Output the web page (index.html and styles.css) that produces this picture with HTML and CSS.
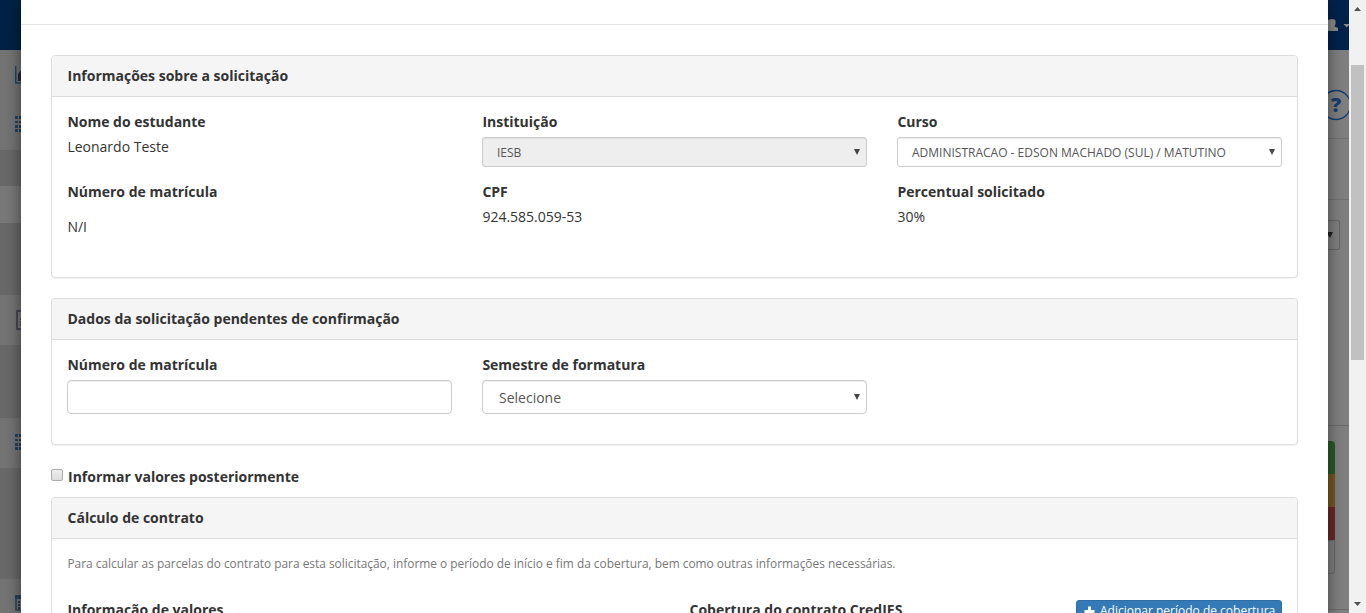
FILE: index.html
```html
<!DOCTYPE html>
<html lang="pt-BR">
<head>
<meta charset="utf-8">
<title>Solicitação</title>
<link rel="stylesheet" href="styles.css">
</head>
<body>
<div class="screen">
  <aside class="side">
    <div class="side-top"></div>
    <div class="side-item h50"><svg class="side-icon" width="18" height="18" viewBox="0 0 18 18"><path d="M.7 0v17H18" fill="none" stroke="#24435f" stroke-width="1.500"/><path d="M3 15V8l3-4 4 4 4-5v12z" fill="#272b45"/></svg></div>
    <div class="side-item h50"><svg class="side-icon" width="18" height="16" viewBox="0 0 18 16" fill="#24435f"><path d="M0 0h3v3H0zM4 0h3v3H4zM8 0h3v3H8zM0 5h3v2H0zM4 5h3v2H4zM8 5h3v2H8zM0 9h3v3H0zM4 9h3v3H4zM8 9h3v3H8zM0 13h3v3H0zM4 13h3v3H4zM8 13h3v3H8z"/></svg></div>
    <div class="side-sub h36"></div>
    <div class="side-active h37"></div>
    <div class="side-sub h72"></div>
    <div class="side-item h50"><svg class="side-icon doc" width="16" height="20" viewBox="0 0 16 20"><path d="M1 1h14v18H1z" fill="#777" stroke="#3b3849" stroke-width="1.500"/><path d="M4 9h8M4 12h8M4 15h8" stroke="#5c3e3e" stroke-width="1.300"/></svg></div>
    <div class="side-sub h73"></div>
    <div class="side-item h50"><svg class="side-icon" width="18" height="16" viewBox="0 0 18 16" fill="#24435f"><path d="M0 0h3v3H0zM4 0h3v3H4zM8 0h3v3H8zM0 5h3v2H0zM4 5h3v2H4zM8 5h3v2H8zM0 9h3v3H0zM4 9h3v3H4zM8 9h3v3H8zM0 13h3v3H0zM4 13h3v3H4zM8 13h3v3H8z"/></svg></div>
    <div class="side-sub h111"></div>
    <div class="side-item h50"><svg class="side-icon" width="16" height="16" viewBox="0 0 16 16"><path d="M1 1h14v14H1z" fill="#777" stroke="#24435f" stroke-width="1.500"/><path d="M0 0h16v4H0z" fill="#24435f"/><path d="M3 6h2v2H3zM6 6h2v2H6zM3 9h2v2H3zM6 9h2v2H6zM3 12h2v2H3z" fill="#303548"/></svg></div>
  </aside>

  <main class="modal">
    <div class="modal-header"></div>
    <div class="modal-body">
      <section class="panel panel-info">
        <h4 class="panel-heading">Informações sobre a solicitação</h4>
        <div class="panel-body grid3">
          <div class="field"><label>Nome do estudante</label><span>Leonardo Teste</span></div>
          <div class="field"><label>Instituição</label><div class="select small disabled"><span>IESB</span><i class="arrow"></i></div></div>
          <div class="field"><label>Curso</label><div class="select small"><span>ADMINISTRACAO - EDSON MACHADO (SUL) / MATUTINO</span><i class="arrow"></i></div></div>
          <div class="field"><label>Número de matrícula</label><span class="low">N/I</span></div>
          <div class="field"><label>CPF</label><span>924.585.059-53</span></div>
          <div class="field"><label>Percentual solicitado</label><span>30%</span></div>
        </div>
      </section>

      <section class="panel panel-pending">
        <h4 class="panel-heading">Dados da solicitação pendentes de confirmação</h4>
        <div class="panel-body grid3">
          <div class="field"><label>Número de matrícula</label><input class="input" type="text"></div>
          <div class="field"><label>Semestre de formatura</label><div class="select"><span>Selecione</span><i class="arrow"></i></div></div>
        </div>
      </section>

      <div class="check-row"><span class="checkbox"></span><label>Informar valores posteriormente</label></div>

      <section class="panel">
        <h4 class="panel-heading">Cálculo de contrato</h4>
        <div class="panel-body contract-body">
          <p class="help-text">Para calcular as parcelas do contrato para esta solicitação, informe o período de início e fim da cobertura, bem como outras informações necessárias.</p>
          <div class="grid2">
            <label>Informação de valores</label>
            <div class="coverage">
              <label>Cobertura do contrato CredIES</label>
              <button class="add-button"><svg width="11" height="11" viewBox="0 0 11 11"><path d="M4 .5h3V4h3.500v3H7v3.500H4V7H.5V4H4z" fill="#fff"/></svg><span>Adicionar período de cobertura</span></button>
            </div>
          </div>
        </div>
      </section>
    </div>
  </main>

  <aside class="behind">
    <div class="topbar">
      <svg width="21" height="14" viewBox="0 0 21 14" fill="#8c8c8c"><path d="M0 2.500Q.5 1 4 1q3.500 0 3.500 2v3L6.500 8.500 10 10v3H0z"/><path d="M15.500 6H22l-3.200 3.500z"/></svg>
    </div>
    <div class="help-area"><svg width="21" height="32" viewBox="0 0 21 32"><circle cx="8" cy="16" r="14.500" fill="none" stroke="#113f72" stroke-width="1.300"/><text x="8" y="23" text-anchor="middle" class="help-mark">?</text></svg></div>
    <div class="band"></div>
    <div class="filter-area"><div class="back-select"><i class="arrow"></i></div></div>
    <div class="actions">
      <div class="action green"></div>
      <div class="action orange"></div>
      <div class="action red"></div>
      <div class="action plain"></div>
    </div>
  </aside>

  <div class="scrollbar">
    <i class="scroll-arrow up"></i>
    <div class="thumb"></div>
    <i class="scroll-arrow down"></i>
  </div>
</div>
</body>
</html>
```
FILE: styles.css
```css
* { box-sizing: border-box; }
body {
  margin: 0;
  overflow: hidden;
  font: 14px/20px "Open Sans", sans-serif;
  color: #333;
  background: #808080;
}
.screen {
  display: grid;
  grid-template-columns: 21px 1307px 21px 17px;
  height: 613px;
  overflow: hidden;
}
label { display: block; font-weight: 700; }

/* Dimmed navigation */
.side { overflow: hidden; height: 613px; }
.side > div { width: 21px; overflow: hidden; }
.side-top { height: 50px; background: #002147; }
.side-item { display: flex; align-items: flex-start; padding: 16px 0 0 15px; background: #747474; }
.side-sub { background: #696969; }
.side-active { background: #797979; }
.side-icon { flex: none; }
.doc { margin: -1px 0 0 1px; }
.h36 { height: 36px; }
.h37 { height: 37px; }
.h50 { height: 50px; }
.h72 { height: 72px; }
.h73 { height: 73px; }
.h111 { height: 111px; }

/* Modal */
.modal {
  position: relative;
  z-index: 1;
  height: 613px;
  background: #fff;
  box-shadow: 0 5px 15px rgba(0, 0, 0, .5);
}
.modal-header { height: 25px; border-bottom: 1px solid #e5e5e5; }
.modal-body { height: 588px; padding: 30px 30px 0; overflow: hidden; }
.panel {
  margin-bottom: 20px;
  border: 1px solid #ddd;
  border-radius: 4px;
  background: #fff;
  box-shadow: 0 1px 1px rgba(0, 0, 0, .05);
}
.panel-info { height: 223px; }
.panel-pending { height: 147px; margin-bottom: 22px; }
.panel-heading {
  margin: 0;
  padding: 10px 15px 10px 15.5px;
  border-bottom: 1px solid #ddd;
  border-radius: 3px 3px 0 0;
  background: #f5f5f5;
  font-size: 14px;
  line-height: 20px;
  font-weight: 700;
}
.panel-body { padding: 15px; }
.contract-body { padding-top: 14px; }
.grid3 { display: grid; grid-template-columns: repeat(3, 1fr); gap: 15px 30px; }
.grid2 { display: grid; grid-template-columns: 1fr 1fr; gap: 30px; }
.field { display: flex; flex-direction: column; gap: 5px; }
.field > label, .field > span, .grid2 > label { padding-left: .4px; }
.low { margin-top: 10px; }
.select {
  display: flex;
  align-items: center;
  justify-content: space-between;
  height: 34px;
  padding: 0 6px 0 16px;
  border: 1px solid #ccc;
  border-radius: 4px;
  background: #fff;
  color: #555;
  box-shadow: inset 0 1px 1px rgba(0, 0, 0, .075);
}
.select span { padding-top: 2px; }
.small { height: 30px; padding-left: 14px; border-radius: 3px; font-size: 12px; }
.disabled { background: #eee; }
.arrow {
  width: 6px;
  height: 6px;
  background: #444;
  clip-path: polygon(0 0, 100% 0, 50% 100%);
}
.input {
  width: 100%;
  height: 34px;
  border: 1px solid #ccc;
  border-radius: 4px;
  box-shadow: inset 0 1px 1px rgba(0, 0, 0, .075);
}
.check-row { display: flex; gap: 5px; margin-bottom: 10px; }
.checkbox {
  width: 12px;
  height: 12px;
  margin-top: 2px;
  border: 1px solid #aaa;
  border-radius: 2px;
  background: linear-gradient(#eee, #dcdcdc);
}
.help-text { margin: 0 0 27px; padding-left: .4px; font-size: 11.9px; line-height: 20px; color: #777; }
.coverage { display: flex; justify-content: space-between; align-items: flex-start; }
.add-button {
  display: flex;
  align-items: center;
  gap: 5px;
  width: 206px;
  height: 22px;
  padding: 0 5px 0 7px;
  border: 1px solid #2e6da4;
  border-radius: 3px;
  background: #337ab7;
  color: #fff;
  font: 12px/18px "Open Sans", sans-serif;
  white-space: nowrap;
}

/* Dimmed page at the right */
.behind { height: 613px; overflow: hidden; background: #808080; }
.topbar { height: 50px; padding-top: 18px; background: #00234c; }
.topbar svg, .help-area svg { display: block; }
.help-area { height: 89px; padding-top: 39px; border-bottom: 1px solid #717171; }
.help-mark { font: 800 20px "Open Sans", sans-serif; fill: #113f72; }
.band { height: 61px; border-bottom: 1px solid #717171; }
.filter-area { height: 226px; padding-top: 20px; border-bottom: 1px solid #6b6b6b; }
.back-select {
  display: flex;
  align-items: center;
  width: 12px;
  height: 30px;
  border: solid #666;
  border-width: 1px 1px 1px 0;
  border-radius: 0 3px 3px 0;
}
.back-select .arrow { width: 5px; background: #222; clip-path: polygon(0 0, 100% 0, 40% 100%, 0 50%); }
.actions { height: 184px; padding-top: 15px; border-bottom: 1px solid #6b6b6b; }
.action { width: 7px; height: 33px; }
.green { background: #2a5c2a; border-radius: 0 4px 0 0; }
.orange { background: #785620; }
.red { background: #6c2928; }
.plain { height: 34px; border: solid #6a6a6a; border-width: 1px 1px 1px 0; border-radius: 0 0 4px; }

/* Scrollbar */
.scrollbar {
  position: relative;
  z-index: 2;
  display: flex;
  flex-direction: column;
  align-items: center;
  height: 613px;
  padding: 7px 0;
  background: #f1f1f1;
}
.scroll-arrow { width: 7px; height: 4px; background: #505050; }
.up { clip-path: polygon(50% 0, 100% 100%, 0 100%); }
.down { margin-top: auto; clip-path: polygon(0 0, 100% 0, 50% 100%); }
.thumb { width: 13px; height: 295px; margin-top: 54px; background: #c1c1c1; }
```
